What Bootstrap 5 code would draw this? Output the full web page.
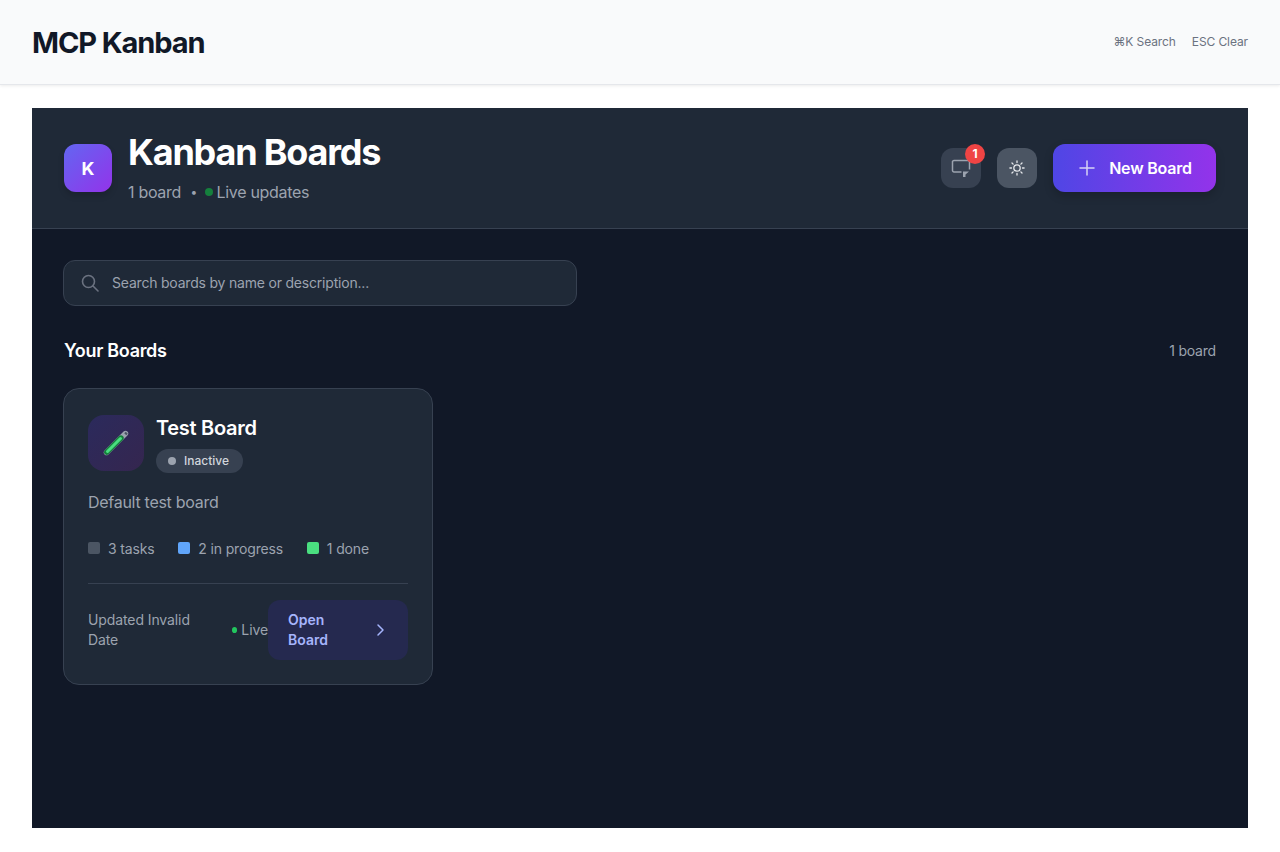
<!DOCTYPE html>
<html lang="en">
<head>
  <meta charset="UTF-8" />
  <meta name="viewport" content="width=device-width, initial-scale=1.0"/>
  <title>MCP Kanban</title>
  <link href="https://cdn.jsdelivr.net/npm/bootstrap@5.3.0/dist/css/bootstrap.min.css" rel="stylesheet">
  <style>
    body { background: #fff; font-family: Inter, "Liberation Sans", sans-serif; height: 852px; overflow: hidden; }
    .topbar { height: 85px; background: #f9fafb; border-bottom: 1px solid #e5e7eb; box-shadow: 0 1px 3px rgba(0,0,0,.08); padding: 0 32px; }
    .brand { font-size: 29px; font-weight: 700; color: #111827; letter-spacing: -1.1px; line-height: 36px; padding-top: 2px; }
    .hint { font-size: 12px; color: #6b7280; line-height: 16px; letter-spacing: -.1px; }
    .page { padding: 23px 32px 0; }
    .panel { background: #111827; height: 720px; }
    .panel-head { height: 121px; background: #1f2937; border-bottom: 1px solid #374151; padding: 0 32px; }
    .logo { width: 48px; height: 48px; border-radius: 12px; background: linear-gradient(135deg, #6366f1, #9333ea); color: #fff; font-weight: 700; font-size: 18px; box-shadow: 0 4px 6px rgba(0,0,0,.15); }
    .head-title { font-size: 36px; font-weight: 700; color: #fff; line-height: 40px; letter-spacing: -1.2px; margin: 0 0 8px; }
    .head-sub { font-size: 16px; color: #9ca3af; line-height: 24px; letter-spacing: -.3px; }
    .sep { font-size: 12px; margin: 0 8.5px 0 9.5px; }
    .live-dot { width: 8px; height: 8px; border-radius: 50%; background: #15803d; margin-right: 3px; }
    .icon-btn { width: 40px; height: 40px; border-radius: 12px; border: 0; padding: 0; }
    .icon-chat { background: #374151; color: #9ca3af; }
    .icon-sun { background: #4b5563; color: #e5e7eb; }
    .count-dot { top: -4px; right: -4px; width: 20px; height: 20px; border-radius: 50%; background: #ef4444; color: #fff; font-size: 12px; font-weight: 700; }
    .new-btn { height: 48px; width: 163px; border: 0; border-radius: 12px; background: linear-gradient(90deg, #4f46e5, #9333ea); color: #fff; font-size: 16px; font-weight: 600; letter-spacing: -.2px; gap: 12px; box-shadow: 0 4px 10px rgba(0,0,0,.2); }
    .panel-body { padding: 31px 32px 0; }
    .search-box { width: 514px; height: 46px; margin-left: -1px; background: #1f2937; border: 1px solid #374151; border-radius: 12px; padding: 0 16px; gap: 12px; color: #6b7280; }
    .search-box span { font-size: 14px; color: #9ca3af; letter-spacing: -.2px; padding-bottom: 2px; }
    .section-row { margin-top: 33px; height: 24px; }
    .section-title { font-size: 18px; font-weight: 600; color: #fff; letter-spacing: -.3px; margin: 0; line-height: 24px; }
    .section-count { font-size: 14px; color: #9ca3af; letter-spacing: -.2px; padding-bottom: 2px; }
    .board { width: 370px; height: 297px; margin: 25px 0 0 -1px; background: #1f2937; border: 1px solid #374151; border-radius: 16px; padding: 26px 24px 0; }
    .board-icon { width: 56px; height: 56px; border-radius: 16px; background: linear-gradient(135deg, #2b2a5c, #35264f); }
    .board-name { font-size: 20px; font-weight: 600; color: #fff; line-height: 28px; margin: -1px 0 7px; letter-spacing: -.3px; }
    .state-pill { height: 24px; padding: 0 12px; border-radius: 12px; background: #374151; color: #d1d5db; font-size: 12px; font-weight: 500; gap: 8px; width: 87px; }
    .state-dot { width: 8px; height: 8px; border-radius: 50%; background: #9ca3af; }
    .board-desc { font-size: 16px; color: #9ca3af; line-height: 24px; margin: 17px 0 0; letter-spacing: -.28px; }
    .stat-row { margin-top: 24px; height: 20px; font-size: 14px; color: #9ca3af; gap: 23.8px; letter-spacing: -.15px; }
    .stat-row > div { gap: 8px; }
    .swatch { width: 12px; height: 12px; border-radius: 2px; }
    .board-foot { margin-top: 25px; padding-top: 16px; border-top: 1px solid #374151; font-size: 14px; line-height: 20px; color: #9ca3af; letter-spacing: -.1px; }
    .updated { width: 144px; padding-right: 30px; flex-shrink: 0; }
    .live-small { gap: 4px; width: 36px; flex-shrink: 0; }
    .live-small i { width: 6px; height: 6px; border-radius: 50%; background: #22c55e; display: block; }
    .open-btn { width: 140px; height: 60px; border: 0; border-radius: 12px; background: #25294f; color: #a5b4fc; font-size: 14px; font-weight: 600; line-height: 20px; text-align: left; padding: 0 20px; flex-shrink: 0; }
  </style>
</head>
<body>

<header class="topbar d-flex align-items-center justify-content-between">
  <div class="brand">MCP Kanban</div>
  <div class="d-flex gap-3 hint">
    <span>⌘K Search</span>
    <span>ESC Clear</span>
  </div>
</header>

<main class="page">
  <div class="panel">
    <div class="panel-head d-flex align-items-center justify-content-between">
      <div class="d-flex align-items-center gap-3">
        <div class="logo d-flex align-items-center justify-content-center">K</div>
        <div>
          <h1 class="head-title">Kanban Boards</h1>
          <div class="head-sub d-flex align-items-center">1 board<span class="sep">•</span><span class="live-dot"></span>Live updates</div>
        </div>
      </div>
      <div class="d-flex align-items-center gap-3">
        <button class="icon-btn icon-chat position-relative d-flex align-items-center justify-content-center">
          <svg width="20" height="20" viewBox="0 0 20 20" fill="none" stroke="currentColor" stroke-width="1.5"><path d="M10.5 14H3a1.500 1.500 0 0 1-1.500-1.500v-9A1.500 1.500 0 0 1 3 2.500h14a1.500 1.500 0 0 1 1.500 1.500v7.500"/><path d="M12 13.500h6l-3.500 3v2.500h-2.500z" fill="currentColor" stroke="none"/></svg>
          <span class="count-dot position-absolute d-flex align-items-center justify-content-center">1</span>
        </button>
        <button class="icon-btn icon-sun d-flex align-items-center justify-content-center">
          <svg width="16" height="16" viewBox="0 0 16 16" fill="none" stroke="currentColor" stroke-width="1.3" stroke-linecap="round"><circle cx="8" cy="8" r="3.2"/><path d="M8 .9v1.6M8 13.5v1.6M.9 8h1.6M13.5 8h1.6M3 3l1.1 1.1M11.9 11.9 13 13M3 13l1.1-1.1M11.9 4.1 13 3"/></svg>
        </button>
        <button class="new-btn d-flex align-items-center justify-content-center">
          <svg width="20" height="20" viewBox="0 0 20 20" fill="none" stroke="#d6d3f5" stroke-width="1.5" stroke-linecap="round"><path d="M10 3v14M3 10h14"/></svg>
          New Board
        </button>
      </div>
    </div>

    <div class="panel-body">
      <div class="search-box d-flex align-items-center">
        <svg width="20" height="20" viewBox="0 0 20 20" fill="none" stroke="currentColor" stroke-width="1.6" stroke-linecap="round"><circle cx="8.500" cy="8.500" r="6"/><path d="m13 13 5 5"/></svg>
        <span>Search boards by name or description...</span>
      </div>

      <div class="section-row d-flex align-items-center justify-content-between">
        <h2 class="section-title">Your Boards</h2>
        <span class="section-count">1 board</span>
      </div>

      <div class="board">
        <div class="d-flex gap-2">
          <div class="board-icon d-flex align-items-center justify-content-center me-1">
            <svg width="26" height="26" viewBox="0 0 26 26"><path d="M22.500 3.500 3.500 22.500" stroke="#9ca3af" stroke-width="5.400" stroke-linecap="round"/><path d="M18 8 3.800 22.200" stroke="#15803d" stroke-width="5.400" stroke-linecap="round"/><path d="M17.500 8.500 4.500 21.500" stroke="#4ade80" stroke-width="3" stroke-linecap="round"/><path d="M22 2.500l2 2" stroke="#4b5563" stroke-width="2.200"/></svg>
          </div>
          <div>
            <h3 class="board-name">Test Board</h3>
            <div class="state-pill d-flex align-items-center"><span class="state-dot"></span>Inactive</div>
          </div>
        </div>
        <p class="board-desc">Default test board</p>
        <div class="stat-row d-flex">
          <div class="d-flex align-items-center"><span class="swatch" style="background:#4b5563"></span>3 tasks</div>
          <div class="d-flex align-items-center"><span class="swatch" style="background:#60a5fa"></span>2 in progress</div>
          <div class="d-flex align-items-center"><span class="swatch" style="background:#4ade80"></span>1 done</div>
        </div>
        <div class="board-foot d-flex align-items-center">
          <div class="updated">Updated Invalid Date</div>
          <div class="live-small d-flex align-items-center"><i></i>Live</div>
          <button class="open-btn d-flex align-items-center justify-content-between">
            <span class="d-block" style="width:50px">Open Board</span>
            <svg width="16" height="16" viewBox="0 0 16 16" fill="none" stroke="currentColor" stroke-width="1.500" stroke-linecap="round" stroke-linejoin="round"><path d="m6 3 5 5-5 5"/></svg>
          </button>
        </div>
      </div>
    </div>
  </div>
</main>

<script src="https://cdn.jsdelivr.net/npm/bootstrap@5.3.0/dist/js/bootstrap.bundle.min.js"></script>
</body>
</html>
